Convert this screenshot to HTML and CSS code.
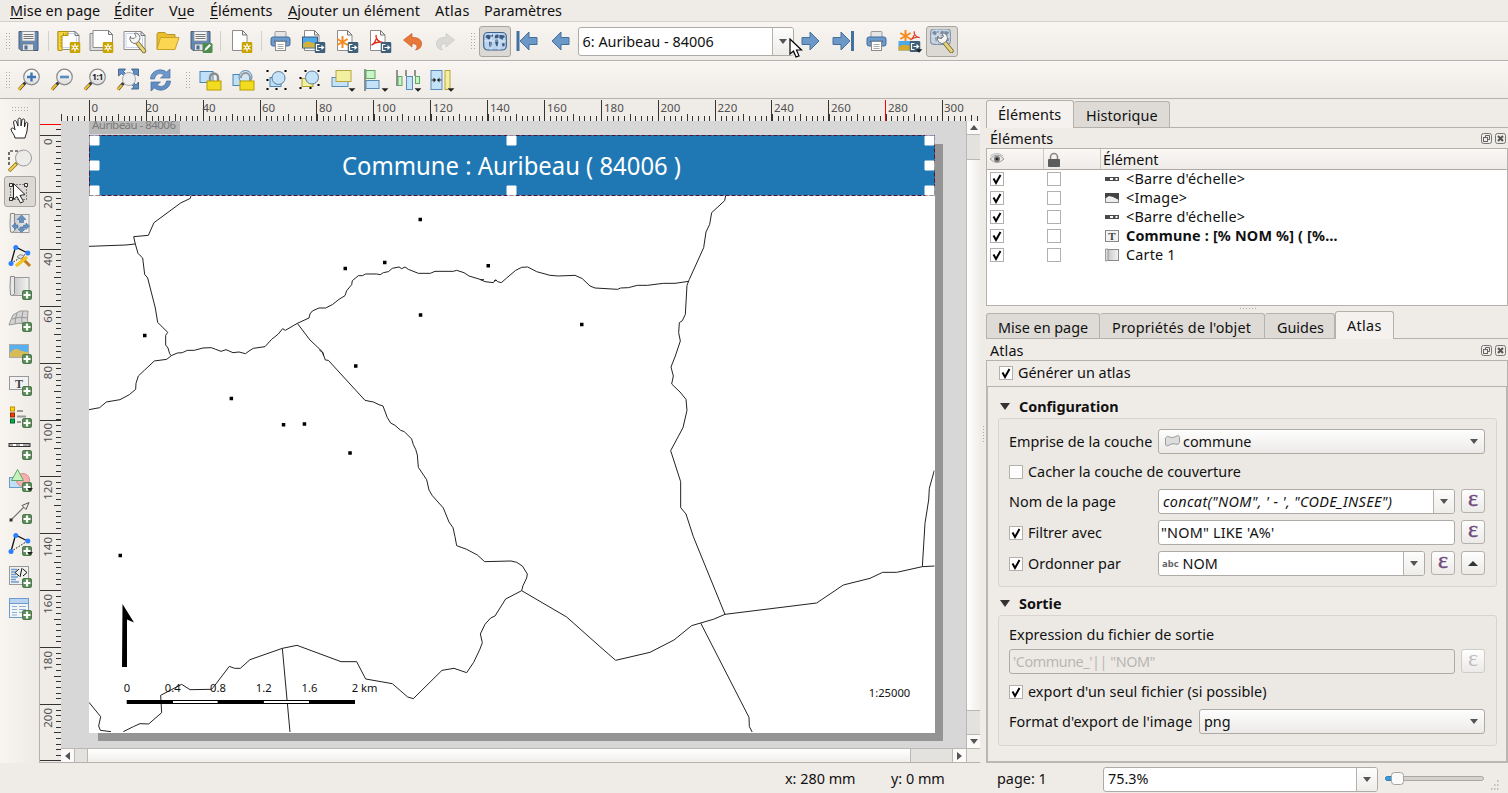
FILE: index.html
```html
<!DOCTYPE html>
<html lang="fr">
<head>
<meta charset="utf-8">
<title>Mise en page</title>
<link rel="stylesheet" href="styles.css">
</head>
<body>
<svg class="defs" width="0" height="0">
  <defs>
    <linearGradient id="lens" x1="0" y1="0" x2="0" y2="1"><stop offset="0" stop-color="#fff"/><stop offset="1" stop-color="#dcdcdc"/></linearGradient>
    <linearGradient id="roll"><stop offset="0" stop-color="#c4c4c4"/><stop offset="1" stop-color="#f4f4f4"/></linearGradient>
    <symbol id="plus" viewBox="0 0 10 10"><rect x=".5" y=".5" width="9" height="9" rx="1.500" fill="#5b8c5a" stroke="#4c7a4b"/><path d="M5 1.500v7M1.500 5h7" stroke="#fff" stroke-width="2.200"/></symbol>
    <symbol id="gold" viewBox="0 0 11 11"><rect width="11" height="11" rx="1.500" fill="#c8a400"/><path d="M5.500 1.500v8M2 3.500l7 4M9 3.500l-7 4" stroke="#fff" stroke-width="1.300"/><circle cx="5.500" cy="5.500" r="2" fill="#fff"/><circle cx="5.500" cy="5.500" r="1" fill="#c8a400"/></symbol>
    <symbol id="exp" viewBox="0 0 11 11"><rect width="11" height="11" rx="1.500" fill="#3f5f78"/><path d="M5 2.500H2v6h3M4 5.500h4" stroke="#fff" stroke-width="1.200" fill="none"/><path d="M7 3l3 2.500L7 8z" fill="#fff"/></symbol>
    <symbol id="sheet" viewBox="0 0 24 24"><path d="M5 1.500h10l4.500 4.500v15.500H5z" fill="#fff" stroke="#8c8c8c"/><path d="M15 1.500V6h4.500z" fill="#eee" stroke="#777"/></symbol>
    <symbol id="wide" viewBox="0 0 24 24"><path d="M1.500 2.500h17l4 4v14h-21z" fill="#fff" stroke="#8c8c8c"/><path d="M3.500 4.500h14l2.500 3v11h-16.500z" fill="none" stroke="#c9d3ee"/><path d="M18.500 2.500v4h4z" fill="#eee" stroke="#777"/></symbol>
    <symbol id="floppy" viewBox="0 0 24 24"><path d="M2.500 2.500h19v19H4.500l-2-2z" fill="#6088b8" stroke="#4a5a70"/><rect x="5.500" y="2.500" width="13" height="9.500" fill="#f4f4f4" stroke="#8a9099" stroke-width=".8"/><path d="M7 5.500h10M7 7.500h10M7 9.500h10" stroke="#777"/><rect x="6" y="15" width="11" height="6.500" fill="#e4e4e4" stroke="#777" stroke-width=".8"/><rect x="8" y="16.500" width="3" height="4" fill="#4a6e9c"/></symbol>
    <symbol id="mag" viewBox="0 0 24 24"><path d="M9 14.500L2.500 21.500" stroke="#3c3c3c" stroke-width="3.200"/><path d="M7 16.500L2 21.800" stroke="#f2bd2a" stroke-width="2.200"/><circle cx="15" cy="9" r="7.800" fill="url(#lens)" stroke="#8b8b8b" stroke-width="1.200"/></symbol>
    <symbol id="printer" viewBox="0 0 24 24"><rect x="6.500" y="2.500" width="11" height="7" rx="1" fill="#e6e6e6" stroke="#9a9a9a"/><rect x="2.500" y="8" width="19" height="9" rx="2" fill="#6c9acb" stroke="#446a9c"/><path d="M5.500 12.500h13" stroke="#3d5b82" stroke-width="1.500"/><rect x="7" y="12.500" width="10" height="9" fill="#fff" stroke="#8a8a8a"/><path d="M9 15.500h6M9 17.500h6M9 19.500h6" stroke="#aaa"/></symbol>
    <symbol id="arrow" viewBox="0 0 24 24"><path d="M3.500 12L12.500 3v5.500h8v7h-8V21z" fill="#6c98c8" stroke="#44709f" stroke-linejoin="round"/></symbol>
    <symbol id="wrench" viewBox="0 0 24 24"><path d="M14 13l6.500 8" stroke="#6e6535" stroke-width="4.400" stroke-linecap="round"/><path d="M14 13l6.500 8" stroke="#e8d57a" stroke-width="2.800" stroke-linecap="round"/><path d="M7 6a5 5 0 0 0 6.500 7l2.500-3A5 5 0 0 0 11 3l1.500 3.500-2 2-3.500-.5z" fill="#f4f4f4" stroke="#777"/></symbol>
    <symbol id="world" viewBox="0 0 24 24"><rect x=".7" y="3.500" width="22.600" height="17.500" rx="4" fill="#bcd3ef" stroke="#3e638f" stroke-width="1.200"/><path d="M3 6.500l2-.8 2 .6 3-.8v2l-2 .5-1 2-2 .5-1-1.500-1.500-.5zM6.500 12l2.500 1v2.500l-1.500 3-1-1-.5-3.500zM12 6.500l2-1 4 .5 3.500.5v2l-1.500.5-.5 2.500-1.500-2-1.500.5-1-1.500-1 .5-2 .5-.8-1zM12 11l2.500-.5 1.500 2-1 2-.5 3-1.500-1-.8-3zM19 14.500l2.500-.5v3l-2 .5z" fill="#37597f"/><path d="M1 12h22M8 4v17M16 4v17" stroke="#eaf2fb" stroke-width=".7"/></symbol>
    <symbol id="nodes" viewBox="0 0 24 24"><path d="M3 19.500L7.500 3 19.500 9" fill="none" stroke="#111" stroke-width="1.300"/><path d="M3 19.500L19.500 9" stroke="#111" stroke-dasharray="1.500 1.500"/><circle cx="3" cy="19.500" r="2.500" fill="#2a7fff"/><circle cx="7.800" cy="3.500" r="2.500" fill="#2a7fff"/><circle cx="19.800" cy="9" r="2.500" fill="#2a7fff"/></symbol>
    <symbol id="dd" viewBox="0 0 6 3"><path d="M0 0h6L3 3z" fill="#222"/></symbol>
    <symbol id="padlock" viewBox="0 0 24 24"><path d="M11.500 13V9.500a4 4 0 0 1 8 0V13" fill="none" stroke="#8c8c8c" stroke-width="2.400"/><rect x="8.500" y="13" width="14" height="9" fill="#f2dc1f" stroke="#b89c00"/></symbol>
    <symbol id="tick" viewBox="0 0 14 14"><rect x=".5" y=".5" width="13" height="13" fill="#fff" stroke="#b4b1ad"/><path d="M3.500 6.500l2.500 4.500 4.500-8" fill="none" stroke="#000" stroke-width="2"/></symbol>
    <symbol id="box" viewBox="0 0 14 14"><rect x=".5" y=".5" width="13" height="13" fill="#fff" stroke="#b4b1ad"/></symbol>
    <symbol id="bar" viewBox="0 0 14 14"><path d="M0 7h14" stroke="#4a4a4a" stroke-width="4"/><path d="M5 7h3M10.500 7h2" stroke="#fff" stroke-width="2"/></symbol>
    <symbol id="float" viewBox="0 0 11 11"><rect x=".5" y=".5" width="10" height="10" rx="2" fill="none" stroke="#777"/><rect x="2.500" y="4.500" width="4" height="4" fill="none" stroke="#666"/><path d="M4.500 4.500v-2h4v4h-2" fill="none" stroke="#666"/></symbol>
    <symbol id="close" viewBox="0 0 11 11"><rect x=".5" y=".5" width="10" height="10" rx="2" fill="none" stroke="#777"/><path d="M3 3l5 5M8 3l-5 5" stroke="#555" stroke-width="2"/></symbol>
    <symbol id="rollmap" viewBox="0 0 24 24"><rect x="4" y="2.500" width="17" height="18" fill="url(#roll)" stroke="#9a9a9a"/><path d="M2.500 1.500h4v17q-1.500 3-4 1.500-1-7 0-18.500z" fill="#e8e8e8" stroke="#8a8a8a"/></symbol>
    <symbol id="star" viewBox="0 0 12 12"><path d="M6 0v12M.8 3l10.400 6M11.200 3L.8 9" stroke="#f58a1f" stroke-width="2"/></symbol>
    <symbol id="pdf" viewBox="0 0 14 14"><path d="M1 12C5 10 7 5 6 1c-1 4 3 8 7 8-4-1-8 0-12 3z" fill="none" stroke="#e03020" stroke-width="1.400"/></symbol>
  </defs>
</svg>

<nav class="menu">
  <span class="m1"><u>M</u>ise en page</span><span class="m2"><u>É</u>diter</span><span class="m3">V<u>u</u>e</span><span class="m4"><u>É</u>léments</span><span class="m5"><u>A</u>jouter un élément</span><span class="m6">Atlas</span><span class="m7">Paramètres</span>
</nav>

<div class="toolbar first">
  <i class="grip"></i>
  <svg class="ic" viewBox="0 0 24 24"><use href="#floppy"/></svg>
  <i class="sep"></i>
  <svg class="ic" viewBox="0 0 24 24"><use href="#wide"/><path d="M1.500 2.500h10v4h-6v15h-4z" fill="#f5d548" stroke="#b89500"/><path d="M3.500 8h2M3.500 11h2M3.500 14h2M3.500 17h2M7 4v2M9.500 4v2" stroke="#a58400" stroke-width=".8"/><use href="#gold" x="13" y="13" width="11" height="11"/></svg>
  <svg class="ic" viewBox="0 0 24 24"><path d="M.5 21.500V4.500h4v13h14v4z" fill="#ddd" stroke="#8c8c8c"/><path d="M3.500 1.500h15.500l4 4v13h-19.500z" fill="#fff" stroke="#8c8c8c"/><path d="M19 1.500v4h4z" fill="#eee" stroke="#777"/><use href="#gold" x="13" y="13" width="11" height="11"/></svg>
  <svg class="ic" viewBox="0 0 24 24"><use href="#wide"/><use href="#wrench" x="1" y="1"/></svg>
  <svg class="ic" viewBox="0 0 24 24"><path d="M1.500 20V5l1-1.500h7l2 2h8v4" fill="#e9bf2c" stroke="#b8942a"/><path d="M1.500 20.500L5 8.500h18.500l-4 12z" fill="#fbd650" stroke="#c9a02c"/></svg>
  <svg class="ic" viewBox="0 0 24 24"><use href="#floppy"/><rect x="14" y="14" width="10" height="10" rx="1.500" fill="#4f8a4e"/><path d="M16 22l1-3 4-4 1.500 1.500-4 4z" fill="#fff"/></svg>
  <i class="sep mid"></i>
  <svg class="ic" viewBox="0 0 24 24"><use href="#sheet" x="-2"/><use href="#gold" x="12" y="13" width="11" height="11"/></svg>
  <i class="sep thin"></i>
  <svg class="ic" viewBox="0 0 24 24"><use href="#printer"/></svg>
  <svg class="ic" viewBox="0 0 24 24"><use href="#sheet" x="-2"/><rect x="1" y="8" width="15" height="11" fill="#4fa8e8" stroke="#385a78"/><path d="M1.500 15q4-4 7-2l7 2v3.500h-14z" fill="#d4b13c"/><use href="#exp" x="13" y="13" width="11" height="11"/></svg>
  <svg class="ic" viewBox="0 0 24 24"><use href="#sheet" x="-2"/><use href="#star" x="2" y="7" width="12" height="12"/><use href="#exp" x="13" y="13" width="11" height="11"/></svg>
  <svg class="ic" viewBox="0 0 24 24"><use href="#sheet" x="-2"/><use href="#pdf" x="3" y="5" width="13" height="13"/><use href="#exp" x="13" y="13" width="11" height="11"/></svg>
  <svg class="ic" viewBox="0 0 24 24"><path d="M3 11l8.500-6.500v4c7-.5 10 3 9.500 7-.4 3-2.500 5-6 5.500 3-3 1.500-6.500-3.500-6.500v3.500z" fill="#e8783a" stroke="#c25a20" stroke-width=".7"/></svg>
  <svg class="ic" viewBox="0 0 24 24"><path d="M21 11l-8.500-6.500v4C5.500 8 2.500 11.500 3 15.500c.4 3 2.500 5 6 5.500-3-3-1.500-6.500 3.500-6.500v3.500z" fill="#d9dad7" stroke="#c6c7c4" stroke-width=".7"/></svg>
  <i class="grip g2"></i>
  <b class="pressed"><svg viewBox="0 0 24 24"><use href="#world"/></svg></b>
  <svg class="ic" viewBox="0 0 24 24"><path d="M2.500 2v20" stroke="#44709f" stroke-width="3"/><use href="#arrow" x="1"/></svg>
  <svg class="ic" viewBox="0 0 24 24"><use href="#arrow"/></svg>
  <div class="combo pages"><span>6: Auribeau - 84006</span><em></em></div>
  <svg class="ic" viewBox="0 0 24 24"><use href="#arrow" transform="matrix(-1 0 0 1 24 0)"/></svg>
  <svg class="ic" viewBox="0 0 24 24"><path d="M21 2v20" stroke="#44709f" stroke-width="3"/><use href="#arrow" transform="matrix(-1 0 0 1 22 0)"/></svg>
  <svg class="ic" viewBox="0 0 24 24"><use href="#printer"/></svg>
  <svg class="ic" viewBox="0 0 24 24"><use href="#star" x="2" y="1" width="12" height="12"/><use href="#pdf" x="12" y="1" width="11" height="12"/><rect x="1" y="12" width="14" height="9.500" fill="#4fa8e8"/><path d="M1 18q4-3 7-2l7 1v4.500H1z" fill="#d4a92c"/><use href="#exp" x="12" y="12" width="11" height="11"/><use href="#dd" x="18" y="20" width="7" height="4"/></svg>
  <b class="pressed"><svg viewBox="0 0 24 24"><use href="#world" y="-3" width="21" height="21" opacity=".6"/><use href="#wrench" x="1" y="1"/></svg></b>
</div>

<div class="toolbar second">
  <i class="grip"></i>
  <svg class="ic" viewBox="0 0 24 24"><use href="#mag"/><path d="M15 4.500v9M10.500 9h9" stroke="#3f76b0" stroke-width="2.400"/></svg>
  <svg class="ic" viewBox="0 0 24 24"><use href="#mag"/><path d="M10.500 9h9" stroke="#5a8cc0" stroke-width="2.600"/></svg>
  <svg class="ic" viewBox="0 0 24 24"><use href="#mag"/><text x="15" y="12.300" class="one">1:1</text></svg>
  <svg class="ic" viewBox="0 0 24 24"><path d="M3 1h7L8 3.500l4 4-2 2-4-4L3 8zM23 1v7l-2.500-2-4 4-2-2 4-4L16 1zM23 21h-7l2.500-2-4-4 2-2 4 4 2.500-3z" fill="#5f8fc4" stroke="#35577f" stroke-width=".8"/><path d="M8 15L2.500 21.500" stroke="#3c3c3c" stroke-width="3.200"/><path d="M6.500 17L2 21.800" stroke="#f2bd2a" stroke-width="2.200"/><circle cx="13.500" cy="11" r="6.500" fill="#eee" stroke="#aaa"/></svg>
  <svg class="ic" viewBox="0 0 24 24"><path d="M2 11C2 3 12-1 18 4l3.500-3v9H12l3.500-3C11 4 7 6 6 11z" fill="#6c98cc" stroke="#476f9f" stroke-width=".7"/><path d="M22 13c0 8-10 12-16 7l-3.500 3v-9H12l-3.500 3c4.500 3 8.500 1 9.500-4z" fill="#5f8dc4" stroke="#476f9f" stroke-width=".7"/></svg>
  <i class="grip g3"></i>
  <svg class="ic" viewBox="0 0 24 24"><rect x="1.500" y="3.500" width="13" height="11" fill="#bfe0f7" stroke="#4a86b4"/><use href="#padlock"/></svg>
  <svg class="ic" viewBox="0 0 24 24"><rect x="1.500" y="6.500" width="10" height="11" fill="#bfe0f7" stroke="#4a86b4"/><circle cx="14" cy="9" r="6.500" fill="#cde6f8" stroke="#5a8cb4"/><path d="M9.500 10a4.500 4.500 0 0 1 9-1V13" fill="none" stroke="#999" stroke-width="2"/><rect x="8.500" y="13" width="14" height="9" fill="#f2dc1f" stroke="#b89c00"/></svg>
  <svg class="ic" viewBox="0 0 24 24"><rect x="5.500" y="9.500" width="11" height="9" fill="#bfe0f7" stroke="#4a86b4"/><circle cx="14" cy="10" r="6.500" fill="#c5e3f8" stroke="#5a7c9c"/><path d="M2 3h2M20 3h2M2 21h2M20 21h2M11 21h2M2 12h2" stroke="#000" stroke-width="2"/></svg>
  <svg class="ic" viewBox="0 0 24 24"><rect x="4.500" y="10.500" width="11" height="8" fill="#f5f0a0" stroke="#b0a02c"/><circle cx="14.500" cy="9.500" r="6.500" fill="#c5e3f8" stroke="#5a7c9c"/><path d="M7 3h2M20 3h2M2 10h2M2 20h2M12 20h2M20 17h2" stroke="#000" stroke-width="2"/></svg>
  <svg class="ic" viewBox="0 0 24 24"><rect x="1.500" y="9.500" width="16" height="9" fill="#c5e3f8" stroke="#5a8cb4"/><rect x="5.500" y="2.500" width="15" height="11" fill="#f3efa0" stroke="#b5a642"/><use href="#dd" x="18" y="20" width="7" height="4"/></svg>
  <svg class="ic" viewBox="0 0 24 24"><path d="M1.500 1v22" stroke="#333"/><rect x="2.500" y="2.500" width="9" height="8" fill="#c8f5c8" stroke="#5fa863"/><rect x="2.500" y="12.500" width="13" height="8" fill="#c5e3f8" stroke="#5a8cb4"/><use href="#dd" x="18" y="20" width="7" height="4"/></svg>
  <svg class="ic" viewBox="0 0 24 24"><path d="M.5 2v16M9.500 2v6M18.500 2v6" stroke="#333"/><rect x="1.500" y="8.500" width="4" height="9" fill="#c8f5c8" stroke="#5fa863"/><rect x="10" y="8.500" width="6" height="13" fill="#c5e3f8" stroke="#5a8cb4"/><rect x="19" y="8.500" width="4" height="7" fill="#c8f5c8" stroke="#5fa863"/><use href="#dd" x="18" y="20" width="7" height="4"/></svg>
  <svg class="ic" viewBox="0 0 24 24"><rect x="1.500" y="2.500" width="11" height="19" fill="#c5e3f8" stroke="#5a8cb4"/><path d="M2 12h4M12 12H8" stroke="#222"/><path d="M4 9.500L6.500 12 4 14.500zM10 9.500L7.500 12l2.500 2.500z" fill="#222"/><rect x="15.500" y="2.500" width="5" height="19" fill="#f3efa0" stroke="#b5a642"/><use href="#dd" x="18" y="20" width="7" height="4"/></svg>
</div>

<div class="work">
  <aside class="tools">
    <i class="hgrip"></i>
    <svg viewBox="0 0 24 24"><path d="M7 22c0-3-4-6-4-9 1-2 3-.5 4 1L5.500 6c.5-2 2.500-2 3 0L10 10V3.500c.7-1.800 2.600-1.800 3 0V10l1-6c.7-1.500 2.500-1.400 2.700.2L16.500 11l1-4c1-1.300 2.500-.6 2.300.8L19 15c-.5 3-1.500 4-2 7z" fill="#fff" stroke="#222"/></svg>
    <svg viewBox="0 0 24 24"><path d="M1 17V3h14" fill="none" stroke="#111" stroke-width="1.200" stroke-dasharray="3 2"/><path d="M9 15L1 23" stroke="#8f7a20" stroke-width="3.600"/><path d="M8 16l-6.500 6.500" stroke="#f4cf4a" stroke-width="2"/><circle cx="15.500" cy="10" r="8" fill="#ecebe9" fill-opacity=".9" stroke="#9b9b9b"/></svg>
    <b class="pressed"><svg viewBox="0 0 24 24"><rect x="2.500" y="4.500" width="16" height="15" fill="none" stroke="#222" stroke-dasharray="1 2"/><path d="M1.500 3.500h3v3h-3zM16.500 3.500h3v3h-3zM1.500 17.500h3v3h-3z" fill="#eee" stroke="#333"/><path d="M5.500 3.500v16l3.500-3 3.500 6.500 3-1.500-3.500-6 5-1z" fill="#fff" stroke="#222"/></svg></b>
    <svg viewBox="0 0 24 24"><use href="#rollmap"/><path d="M13.500 3l4.500 4.500h-2.500v3h-4v-3H9zM4 14l3.500-3V13h2.500v3H7.500V17.500zM21.500 14l-3.500-3V13h-2.500v3H18V17.500zM13.500 20.500l-3.500-3.500h2v-2h3v2h2z" fill="#6590c0" stroke="#476f9f" stroke-width=".6"/></svg>
    <svg viewBox="0 0 24 24"><use href="#nodes"/><path d="M13 13l9 9" stroke="#c07a18" stroke-width="3"/><path d="M19 13L8 22" stroke="#f2c21e" stroke-width="3.500"/><path d="M9 13q3-4 7-1l-3 3z" fill="#ddd" stroke="#888"/></svg>
    <svg viewBox="0 0 24 24"><use href="#rollmap" y="-1"/><use href="#plus" x="14" y="14" width="10" height="10"/></svg>
    <svg viewBox="0 0 24 24"><path d="M1 17q2-6 4-10l7-4h8q-1 7 0 13-9-2-19 1z" fill="#d4d4d4" stroke="#999"/><path d="M4 11q8-3 16-1M9 5q-2 6-2 11M15 3q-2 7-1 13" fill="none" stroke="#999"/><use href="#plus" x="14" y="14" width="10" height="10"/></svg>
    <svg viewBox="0 0 24 24"><rect x="1.500" y="4.500" width="19" height="13" fill="#58b0f0" stroke="#aaa"/><path d="M2 13q4-5 8-4 4 3 10 3v5H2z" fill="#d6bb58"/><use href="#plus" x="14" y="14" width="10" height="10"/></svg>
    <svg viewBox="0 0 24 24"><rect x="1.500" y="4.500" width="19" height="13" fill="#f2f2f2" stroke="#999"/><text x="11" y="15.500" class="tee">T</text><use href="#plus" x="14" y="14" width="10" height="10"/></svg>
    <svg viewBox="0 0 24 24"><path d="M9 7h6M9 12.500h9M9 18h4" stroke="#999" stroke-width="2"/><rect x="2.500" y="3" width="4" height="4" fill="#ffd800" stroke="#c09000"/><rect x="2.500" y="9" width="4" height="4" fill="#f04000" stroke="#902800"/><rect x="2.500" y="15" width="4" height="4" fill="#00b050" stroke="#046030"/><use href="#plus" x="14" y="14" width="10" height="10"/></svg>
    <svg viewBox="0 0 24 24"><rect x="1" y="7.500" width="21" height="3" fill="#aaa" stroke="#333"/><path d="M5 9h3M12 9h3" stroke="#fff" stroke-width="2"/><use href="#plus" x="14" y="14" width="10" height="10"/></svg>
    <svg viewBox="0 0 24 24"><rect x="1.500" y="9.500" width="13" height="10" fill="#bfe0f7" stroke="#6d9cc0"/><circle cx="15" cy="12" r="6.500" fill="#f7b0b0" stroke="#d88"/><path d="M9.500 1.500l6 11h-12z" fill="#c6f2bf" stroke="#5fa863"/><use href="#plus" x="14" y="14" width="10" height="10"/><use href="#dd" x="19" y="20" width="6" height="3"/></svg>
    <svg viewBox="0 0 24 24"><path d="M3 20L17 6" stroke="#777" stroke-width="1.200"/><rect x="1.500" y="18.500" width="3" height="3" fill="#333"/><path d="M21 2.500l-7 3 4 4z" fill="#eee" stroke="#555"/><use href="#plus" x="14" y="14" width="10" height="10"/></svg>
    <svg viewBox="0 0 24 24"><use href="#nodes"/><use href="#plus" x="14" y="14" width="10" height="10"/><use href="#dd" x="19" y="20" width="6" height="3"/></svg>
    <svg viewBox="0 0 24 24"><rect x="1.500" y="2.500" width="19" height="18" fill="#f0f0ee" stroke="#999"/><path d="M3 5.500h6M3 8h4M3 10.500h5M3 13h7M3 15.500h5M3 18h8" stroke="#6b9bd0" stroke-width="1.500"/><path d="M11 5l-4 3.500 4 3.500M15 5l4 3.500-4 3.500M14 4l-2 9" fill="none" stroke="#111"/><use href="#plus" x="14" y="14" width="10" height="10"/></svg>
    <svg viewBox="0 0 24 24"><rect x="1.500" y="2.500" width="19" height="19" fill="#f4f4f4" stroke="#6d9cd0"/><path d="M2 5h18" stroke="#b8d4f0" stroke-width="4"/><path d="M2 7.500h18" stroke="#6d9cd0"/><path d="M4 10.500h5M11 10.500h7M4 13.500h5M11 13.500h7M4 16.500h5M11 16.500h3M4 19h5" stroke="#8ab0dc"/><use href="#plus" x="14" y="14" width="10" height="10"/></svg>
  </aside>

  <main class="view">
    <svg class="canvas" width="926" height="649" viewBox="40 99 926 649">
      <rect x="39.500" y="99" width="940" height="22" fill="#efebe7"/>
      <rect x="39.500" y="99" width="21.500" height="660" fill="#efebe7"/>
      <rect x="61" y="121" width="906" height="628" fill="#d7d7d7"/>
      <rect x="89" y="121" width="91" height="13" fill="#b9b9b9"/>
      <text x="92" y="129" class="tag" textLength="84">Auribeau - 84006</text>
      <rect x="98" y="144" width="845" height="597" fill="#949494"/>
      <rect x="89" y="135" width="846" height="598" fill="#fff"/>
      <svg x="89" y="135" width="845.500" height="597" viewBox="89 135 845.500 597">
        <g class="line">
          <g transform="translate(0 96) scale(.33333)">
            <path d="M267 451 378 447 405 444"/>
            <path d="M573 299 571 307 542 321 462 380 445 418 401 422 406 444 414 472 428 486 434 535 443 546 466 636 473 679 503 709 497 718 497 747 504 756 509 773 514 779 532 771 547 770 562 763 583 763 609 756 634 755 647 760 663 766 678 761 699 770 717 768 736 773 750 763"/>
            <path d="M514 779 500 790 463 795 434 822 415 840 408 862 407 880 388 896 360 911 319 918 299 935 267 941"/>
          </g>
          <g transform="translate(250 96) scale(.33333)">
            <path d="M0 763 10 757 45 752 65 730 85 714 98 698 106 703 142 682 177 666 180 654 187 645 207 636 227 636 247 626 267 610 285 599 290 584 305 566 307 554 325 539 337 539 347 534 380 534 391 536 400 530 415 527 427 517 447 513 455 518 465 513 475 520 505 532 541 532 555 526 610 526 620 523 642 530 657 540 690 550 705 557 730 560 737 551 743 557 754 560 770 546 797 523 815 514 833 513 860 527 900 538 925 540 975 538 997 548 1020 570 1035 576 1103 580 1112 576 1135 575 1162 568 1192 568 1240 562 1275 562 1316 556"/>
            <path d="M690 551h12M732 554h8M142 682 180 732 218 768 221 780"/>
          </g>
          <g transform="translate(640 96) scale(.33333)">
            <path d="M257 299 254 314 215 350 209 385 198 408 191 455 148 550 141 568 136 655 127 674 118 680 116 710 121 735 106 780 93 813 100 840 95 864 120 888 138 910 141 943 129 995 92 1064"/>
          </g>
          <g transform="translate(600 440) scale(.33333)">
            <path d="M212 32 242 125 242 203 258 222 280 290 375 523"/>
            <path d="M0 620 47 661 150 637 222 600 275 557 302 549 340 538 375 523 650 489 730 435 810 415 848 397 890 397 967 380 1005 378"/>
            <path d="M967 380 975 250 986 180 988 145 1003 91M302 549 447 832 448 860 457 877"/>
          </g>
          <g transform="translate(250 350) scale(.33333)">
            <path d="M208 0 218 8 226 30 235 31 345 151 370 156 387 164 399 168 412 203 422 219 435 226 452 241 463 245 485 267 490 284 497 298 502 315 505 352 530 389 537 420 547 437 580 474 597 516 609 533 615 560 620 587 650 598 682 615 704 635 783 633 800 637 817 648 832 672 830 684 819 707 815 722 950 801 1050 890"/>
            <path d="M815 722 767 747 735 798 722 804 705 823 691 852 697 878 690 897 671 937 650 968 612 955 576 961 490 1046 473 1041 427 1001 347 987 320 935 273 935 141 886 97 895 0 929 -29 955 -46 955 -62 949 -110 1012 -116 1018 -180 1019 -205 1003 -268 1036 -265 1088 -304 1122 -330 1121 -350 1130 -380 1145"/>
            <path d="M97 895 120 1146M-483 1057 -448 1100 -454 1128 -449 1141 -417 1145"/>
          </g>
        </g>
      </svg>
      <path class="dots" d="M143 335.500h3.500M343.500 268.500h3.500M383 262.500h3.500M418.500 219.500h3.500M486.500 265.800h3.500M418.800 315h3.500M580 324.600h3.500M354 366h3.500M229.600 398.500h3.500M281.800 424.700h3.500M302.700 424h3.500M348.300 453h3.500M118.500 555.600h3.500"/>
      <path d="M122.500 604l11.500 18.500-7-3V667h-5z" fill="#000"/>
      <path d="M126.700 701.900H355" stroke="#000" stroke-width="4"/>
      <path d="M173 701.900h44.600M263.900 701.900H309" stroke="#fff" stroke-width="2"/>
      <g class="scale">
        <text x="127" y="692">0</text><text x="172.700" y="692">0.4</text><text x="218" y="692">0.8</text><text x="263.700" y="692">1.2</text><text x="309.500" y="692">1.6</text><text x="364.500" y="692">2 km</text>
        <text x="889.500" y="697">1:25000</text>
      </g>
      <rect x="89" y="135" width="846" height="60.500" fill="#1f78b4"/>
      <rect x="89.500" y="135.500" width="845" height="60" fill="none" stroke="#55102f" stroke-dasharray="4 2"/>
      <path d="M90 136h9v9h-9zM90 161h9v9h-9zM90 186h9v9h-9zM507 136h9v9h-9zM507 186h9v9h-9zM925 136h9v9h-9zM925 161h9v9h-9zM925 186h9v9h-9z" fill="#fff" stroke="#fff"/>
      <text x="511.500" y="175" class="title" textLength="339" lengthAdjust="spacingAndGlyphs">Commune : Auribeau ( 84006 )</text>

      <g class="ticks" shape-rendering="crispEdges">
        <path d="M61 118.500H967" stroke-width="5" stroke-dasharray="1 4.687"/>
        <path d="M61 117.500H967" stroke-width="7" stroke-dasharray="1 27.435"/>
        <path d="M89 110.500H967" stroke-width="21" stroke-dasharray="1 55.870"/>
        <path d="M58.500 123.600V759" stroke-width="5" stroke-dasharray="1 4.690"/>
        <path d="M57.500 135V759" stroke-width="7" stroke-dasharray="1 27.450"/>
        <path d="M50.500 135V759" stroke-width="21" stroke-dasharray="1 55.900"/>
        <path d="M885.500 100v21M40 124.500h21" class="red"/>
      </g>
      <g class="nums">
        <text x="91.500" y="112">0</text><text x="145.500" y="112">20</text><text x="202.500" y="112">40</text><text x="262" y="112">60</text><text x="319" y="112">80</text><text x="376" y="112">100</text><text x="433" y="112">120</text><text x="490" y="112">140</text><text x="547" y="112">160</text><text x="604" y="112">180</text><text x="660.500" y="112">200</text><text x="717.500" y="112">220</text><text x="774" y="112">240</text><text x="831" y="112">260</text><text x="888" y="112">280</text><text x="944" y="112">300</text>
      </g>
      <g class="nums end">
        <text transform="translate(52 138.500) rotate(-90)">0</text><text transform="translate(52 195.500) rotate(-90)">20</text><text transform="translate(52 252.500) rotate(-90)">40</text><text transform="translate(52 309.500) rotate(-90)">60</text><text transform="translate(52 366) rotate(-90)">80</text><text transform="translate(52 423) rotate(-90)">100</text><text transform="translate(52 480) rotate(-90)">120</text><text transform="translate(52 537) rotate(-90)">140</text><text transform="translate(52 594) rotate(-90)">160</text><text transform="translate(52 651) rotate(-90)">180</text><text transform="translate(52 708) rotate(-90)">200</text>
      </g>
    </svg>
    <div class="vcol">
      <svg class="rend" width="14" height="22" viewBox="966 99 14 22" shape-rendering="crispEdges"><path d="M971 118.500h8M970.900 117.500h1" stroke="#333" stroke-width="5" stroke-dasharray="1 4.687"/></svg>
      <div class="vs"><i class="btn up"></i><i class="gap a"></i><i class="thumb"></i><i class="gap b"></i><i class="btn down"></i></div>
    </div>
    <div class="hs"><i class="rul"></i><i class="btn left"></i><i class="gap a"></i><i class="thumb"></i><i class="gap b"></i><i class="btn right"></i><i class="corner"></i></div>
  </main>

  <div class="vsplit"><i></i></div>

  <section class="side">
    <div class="tabs t1"><span class="on el">Éléments</span><span class="hi">Historique</span></div>
    <div class="head h1"><span>Éléments</span><svg viewBox="0 0 11 11"><use href="#float"/></svg><svg viewBox="0 0 11 11"><use href="#close"/></svg></div>
    <div class="list">
      <div class="lh">
        <span><svg width="16" height="12" viewBox="0 0 16 12"><path d="M1 6q7-8 14 0-7 7-14 0z" fill="#e8e8e8" stroke="#999"/><circle cx="8" cy="6" r="3" fill="#777"/><circle cx="8" cy="6" r="1.300" fill="#222"/><path d="M1 3q7-5 13 0" fill="none" stroke="#bbb"/></svg></span>
        <span><svg width="12" height="15" viewBox="0 0 12 15"><path d="M2.500 8V5a3.500 3.500 0 0 1 7 0v3" fill="none" stroke="#888" stroke-width="1.600"/><rect y="7" width="12" height="8" rx="1" fill="#5c5c5c"/></svg></span>
        <span>Élément</span>
      </div>
      <div class="lr"><svg viewBox="0 0 14 14"><use href="#tick"/></svg><svg viewBox="0 0 14 14"><use href="#box"/></svg><svg viewBox="0 0 14 14"><use href="#bar"/></svg><span>&lt;Barre d'échelle&gt;</span></div>
      <div class="lr"><svg viewBox="0 0 14 14"><use href="#tick"/></svg><svg viewBox="0 0 14 14"><use href="#box"/></svg><svg viewBox="0 0 14 14"><rect x=".5" y="2.500" width="13" height="9" fill="#eee" stroke="#888"/><path d="M0 2h14v7L8 6 4 5 1 7H0z" fill="#444"/></svg><span>&lt;Image&gt;</span></div>
      <div class="lr"><svg viewBox="0 0 14 14"><use href="#tick"/></svg><svg viewBox="0 0 14 14"><use href="#box"/></svg><svg viewBox="0 0 14 14"><use href="#bar"/></svg><span>&lt;Barre d'échelle&gt;</span></div>
      <div class="lr"><svg viewBox="0 0 14 14"><use href="#tick"/></svg><svg viewBox="0 0 14 14"><use href="#box"/></svg><svg viewBox="0 0 14 14"><rect x=".5" y="1.500" width="13" height="11" fill="#f2f2f2" stroke="#888"/><text x="7" y="11" class="tee small">T</text></svg><span class="bold">Commune : [% NOM %] ( [%…</span></div>
      <div class="lr"><svg viewBox="0 0 14 14"><use href="#tick"/></svg><svg viewBox="0 0 14 14"><use href="#box"/></svg><svg viewBox="0 0 14 14"><rect x="2" y="1.500" width="11.500" height="11" fill="url(#roll)" stroke="#8a8a8a"/><path d="M.5 1h2.500v10.500l-1 1.500H.5z" fill="#ddd" stroke="#888" stroke-width=".8"/></svg><span>Carte 1</span></div>
    </div>
    <div class="hsplit"><i></i></div>
    <div class="tabs t2"><span class="mp">Mise en page</span><span class="po">Propriétés de l'objet</span><span class="gu">Guides</span><span class="on at">Atlas</span></div>
    <div class="head h2"><span>Atlas</span><svg viewBox="0 0 11 11"><use href="#float"/></svg><svg viewBox="0 0 11 11"><use href="#close"/></svg></div>
    <div class="gen"><svg class="cb" viewBox="0 0 14 14"><use href="#tick"/></svg><span>Générer un atlas</span></div>
    <div class="scroll">
      <h3>Configuration</h3>
      <div class="group g1">
        <div class="row"><span class="lab">Emprise de la couche</span><div class="combo soft"><svg width="17" height="14" viewBox="0 0 17 14"><path d="M1.500 4q2-3 4-1 3 1.500 6-.5 4-2 4 1v5q-1 3-4 1.500-4-1-6 1-4 2-4-1z" fill="#ddd" stroke="#999"/></svg><span>commune</span><em></em></div></div>
        <div class="row"><svg class="cb" viewBox="0 0 14 14"><use href="#box"/></svg><span>Cacher la couche de couverture</span></div>
        <div class="row r3"><span class="lab">Nom de la page</span><div class="combo edit"><span class="it">concat("NOM", ' - ', "CODE_INSEE")</span><em></em></div><button>ε</button></div>
        <div class="row r4"><svg class="cb" viewBox="0 0 14 14"><use href="#tick"/></svg><span class="lab2">Filtrer avec</span><div class="combo edit"><span class="q">"NOM" LIKE 'A%'</span></div><button>ε</button></div>
        <div class="row r5"><svg class="cb" viewBox="0 0 14 14"><use href="#tick"/></svg><span class="lab2">Ordonner par</span><div class="combo edit"><small>abc</small><span>NOM</span><em></em></div><button>ε</button><button class="tri"><i></i></button></div>
      </div>
      <h3 class="s2">Sortie</h3>
      <div class="group g2b">
        <div class="row e1"><span>Expression du fichier de sortie</span></div>
        <div class="row e2"><div class="combo off"><span>'Commune_'|| "NOM"</span></div><button class="dim">ε</button></div>
        <div class="row e3"><svg class="cb" viewBox="0 0 14 14"><use href="#tick"/></svg><span>export d'un seul fichier (si possible)</span></div>
        <div class="row e4"><span class="lab3">Format d'export de l'image</span><div class="combo soft"><span>png</span><em></em></div></div>
      </div>
    </div>
  </section>
</div>

<footer class="status">
  <span class="sx">x: 280 mm</span><span class="sy">y: 0 mm</span><span class="sp">page: 1</span>
  <div class="combo edit zoom"><span>75.3%</span><em></em></div>
  <svg width="123" height="28" viewBox="0 0 123 28"><rect x="7.500" y="11.500" width="98" height="4" rx="2" fill="#d5d2ce" stroke="#aaa7a3"/><rect x="7.500" y="11.500" width="12" height="4" rx="2" fill="#3a9bdc" stroke="#2f7fb8"/><rect x="13.500" y="7.500" width="12" height="12" rx="3" fill="#fbfafa" stroke="#a5a29e"/><path d="M125 16h2" stroke="none"/><path d="M126 16h0M119 16h1.500M116 20h1.500M119 20h1.500M113 24h1.500M116 24h1.500M119 24h1.500" stroke="#b5b1ac" stroke-width="1.500"/></svg>
</footer>
<svg class="cursor" width="14" height="20" viewBox="0 0 14 20"><path d="M1 1v15l3.500-3 2.500 6 3-1.200L7.500 12H12.500z" fill="#fff" stroke="#000" stroke-width="1.200"/></svg>
</body>
</html>
```
FILE: styles.css
```css
* { box-sizing: border-box; }
body { margin: 0; width: 1508px; height: 793px; overflow: hidden; background: #efebe7; color: #111; font: 14.4px/20px "Noto Sans", sans-serif; display: flex; flex-direction: column; white-space: nowrap; position: relative; }
i, em { font-style: normal; display: block; flex: none; }
svg { flex: none; display: block; }
.defs { position: absolute; }
.cursor { position: absolute; left: 789px; top: 38px; }

.menu { height: 22px; border-bottom: 1px solid #d4d0cc; display: flex; padding-left: 10px; flex: none; line-height: 21px; }
.menu u { text-underline-offset: 2px; }
.m1 { width: 104px; } .m2 { width: 55px; } .m3 { width: 41px; } .m4 { width: 78px; }
.m5 { width: 147px; letter-spacing: .07px; } .m6 { width: 49px; letter-spacing: .3px; }

.toolbar { display: flex; align-items: center; background: linear-gradient(#f8f5f2, #efebe6); border-bottom: 1px solid #b5b2ae; flex: none; }
.first { height: 39px; }
.second { height: 38px; border-top: 1px solid #faf8f6; }
.ic { width: 33px; height: 24px; overflow: visible; }
.grip { width: 5px; height: 18px; margin: 0 2px 0 5px; background: radial-gradient(circle, #aaa 0 .7px, transparent 1px) 0 0 / 3px 3px; }
.g2 { margin: 0 4px 0 8px; }
.g3 { margin: 0 4px 0 8px; }
.sep { width: 7px; height: 20px; background: linear-gradient(#d4d0cc, #d4d0cc) 3px 0 / 1px 20px no-repeat; }
.mid { width: 8px; } .thin { width: 6px; }
.pressed { width: 32px; height: 31px; border: 1px solid #a8a4a0; border-radius: 3px; background: #dcd8d4; display: flex; align-items: center; justify-content: center; flex: none; }
.pressed svg { width: 24px; height: 24px; }
.one { font: bold 8.500px "Noto Sans", sans-serif; letter-spacing: -.4px; text-anchor: middle; fill: #222; }
.tee { font: bold 12px "Liberation Serif", serif; text-anchor: middle; fill: #444; }
.tee.small { font-size: 11px; }

.combo { display: flex; align-items: center; height: 25px; border: 1px solid #aeaaa6; border-radius: 3px; background: #fff; padding-left: 4px; flex: none; }
.combo span { flex: 1; }
.combo em { width: 21px; height: 100%; border-left: 1px solid #b5b1ad; border-radius: 0 2px 2px 0; background: linear-gradient(#fdfdfc, #efedea); display: flex; align-items: center; justify-content: center; }
.combo em::after { content: ""; border: 4px solid transparent; border-top: 5px solid #555; border-bottom: 0; }
.combo.soft { background: linear-gradient(#fefefe, #eceae7); }
.combo.soft em { border: 0; background: none; }
.combo.pages { width: 216px; height: 29px; margin: 0 .5px; }
.combo.pages span { padding-top: 1px; letter-spacing: .02px; }
.combo.off { background: #edeae5; color: #b9b6b2; }

.work { display: flex; height: 664px; flex: none; }
.tools { width: 39px; display: flex; flex-direction: column; align-items: center; background: linear-gradient(90deg, #f8f5f1, #eeeae6); padding-top: 6.500px; }
.tools > svg { width: 24px; height: 24px; margin: 4px 0; overflow: visible; }
.tools .pressed { margin: .5px 0; }
.hgrip { width: 18px; height: 6px; background: radial-gradient(circle, #aaa 0 .7px, transparent 1px) 0 0 / 3px 3px; }

.view { width: 941px; border-left: 1px solid #b5b2ae; display: grid; grid-template: 649px 15px / 926px 14px; }
.line path { fill: none; stroke: #222; stroke-width: 1px; vector-effect: non-scaling-stroke; }
.dots { stroke: #000; stroke-width: 3.500px; }
.scale { font-size: 11.200px; text-anchor: middle; fill: #111; }
.title { font-size: 25px; text-anchor: middle; fill: #fff; }
.tag { font-size: 11.500px; fill: #7b7b7b; }
.ticks path { stroke: #333; fill: none; }
.ticks .red { stroke: #f00; }
.nums { font-size: 11.500px; fill: #505050; }
.end { text-anchor: end; }
.vcol { display: flex; flex-direction: column; height: 649px; }
.rend { height: 22px; }
.vs { flex: 1; display: flex; flex-direction: column; border-left: 1px solid #bab7b4; }
.btn { background: #fbfaf9; display: flex; align-items: center; justify-content: center; }
.vs .btn { height: 13px; } .vs .a { height: 26px; } .vs .b { height: 25px; } .vs .thumb { flex: 1; }
.gap { background: #e4e2de; }
.vs .gap { border: solid #bab7b4; border-width: 1px 0; }
.vs .thumb { background: linear-gradient(90deg, #fff, #f0eeeb); }
.vs .down { height: 13px; }
.btn::after { content: ""; border: 4px solid transparent; }
.up::after { border-bottom: 5px solid #555; border-top: 0; }
.down::after { border-top: 5px solid #555; border-bottom: 0; }
.left::after { border-right: 5px solid #555; border-left: 0; }
.right::after { border-left: 5px solid #555; border-right: 0; }
.hs { grid-column: 1 / 3; display: flex; border: solid #b5b2ae; border-width: 0 0 1px; }
.rul { width: 21px; background: linear-gradient(#333, #333) right 1px / 5px 1px no-repeat, linear-gradient(#333, #333) right 7px / 5px 1px no-repeat, linear-gradient(#333, #333) right 12px / 21px 1px no-repeat; }
.hs .btn, .hs .gap, .hs .thumb { border-top: 1px solid #bab7b4; }
.hs .btn { width: 13px; } .hs .a { width: 14px; } .hs .b { width: 43px; } .hs .thumb { flex: 1; background: linear-gradient(#fff, #f0eeeb); }
.hs .gap { border-left: 1px solid #bab7b4; border-right: 1px solid #bab7b4; }
.hs .corner { width: 14px; border-left: 1px solid #bab7b4; border-top: 1px solid #bab7b4; }

.vsplit { width: 6px; padding: 326px 0 0 2px; }
.vsplit i { width: 3px; height: 17px; background: radial-gradient(circle, #aaa 0 .7px, transparent 1px) 0 0 / 3px 3px; }
.side { width: 522px; display: flex; flex-direction: column; }
.tabs { display: flex; align-items: flex-end; height: 28px; margin-top: 1px; border-bottom: 1px solid #b5b2ae; flex: none; }
.tabs span { height: 26px; line-height: 27px; padding-left: 12px; background: #dedad5; border: 1px solid #b5b2ae; border-left-width: 0; border-bottom: 0; border-radius: 3px 3px 0 0; }
.tabs span.on { height: 28px; line-height: 28px; background: #f4f1ee; margin-bottom: -1px; border-left-width: 1px; }
.t1 span:first-child { padding-left: 11px; }
.el { width: 88px; letter-spacing: .1px; } .hi { width: 96px; letter-spacing: .1px; }
.t2 { height: 27px; margin-top: 0; }
.t2 span { height: 25px; line-height: 27px; }
.t2 span.mp { width: 114px; padding-left: 11px; border-left-width: 1px; }
.po { width: 165px; letter-spacing: .2px; } .gu { width: 70px; }
.t2 span.at { width: 59px; padding-left: 11px; letter-spacing: .3px; }
.head { display: flex; align-items: center; padding: 1px 2px 0 4px; gap: 3px; flex: none; }
.head span { flex: 1; letter-spacing: .1px; padding-top: 1px; }
.head svg { width: 11px; height: 11px; }
.h1 { height: 20px; }
.h2 { height: 21px; }
.list { height: 158px; background: #fff; border: 1px solid #b5b2ae; flex: none; }
.lh { height: 21px; display: flex; background: linear-gradient(#faf7f5, #eeebe8); border-bottom: 1px solid #aeaba7; margin-bottom: -1px; }
.lh span { border-right: 1px solid #cbc8c4; width: 57px; padding: 4px 0 0 2px; }
.lh span:nth-child(2) { padding: 3px 0 0 4px; }
.lh span:nth-child(3) { border: 0; padding: 1px 0 0 2px; }
.lr { height: 19px; display: flex; align-items: center; padding-left: 3px; }
.lr svg { width: 14px; height: 14px; }
.lr svg:nth-child(2) { margin: 0 44px 0 43px; }
.lr svg:nth-child(3) { margin-right: 7px; }
.lr span { letter-spacing: .18px; }
.bold { font-weight: 700; }
.hsplit { height: 6px; padding: 1px 0 0 253px; }
.hsplit i { width: 18px; height: 3px; background: radial-gradient(circle, #aaa 0 .7px, transparent 1px) 0 0 / 3px 3px; }
.gen { height: 27px; border: 1px solid #b5b2ae; display: flex; align-items: center; padding: 0 0 2px 12px; gap: 5px; flex: none; }
.cb { width: 14px; height: 14px; }
.scroll { flex: 1; border: 2px solid #bab7b3; border-top: 0; padding: 8px 9px 0 10px; }
h3 { margin: 0 0 1px; font-size: 14.400px; height: 22px; line-height: 21px; display: flex; align-items: center; gap: 9px; padding-left: 2px; }
h3::before { content: ""; border: 5.500px solid transparent; border-top: 7px solid #333; border-bottom: 0; }
.s2 { margin-top: 5px; }
.group { width: 499px; border: 1px solid #d8d5d1; border-radius: 3px; background: #ece9e4; padding: 10px 11px 0 10px; display: flex; flex-direction: column; }
.g1 { height: 169px; }
.g2b { height: 131px; padding-top: 8px; }
.row { display: flex; align-items: center; height: 25px; flex: none; }
.row .cb { margin-right: 5px; }
.lab { width: 149px; }
.row .soft { flex: 1; }
.soft svg { margin: -2px 2px 0 1px; }
.row:nth-child(2) { height: 35px; }
.row .edit { width: 297px; margin-right: 6px; padding-left: 4px; }
.lab2 { width: 130px; }
.r4, .r5 { margin-top: 6px; }
.r5 .edit { width: 267px; padding-left: 3px; }
.it { font-style: italic; letter-spacing: .35px; }
.q { margin-left: -2px; letter-spacing: .2px; }
small { font: bold 9.500px "Noto Sans", sans-serif; color: #666; margin-right: 4px; }
button { width: 24px; height: 24px; border: 1px solid #b5b1ad; border-radius: 3px; background: linear-gradient(#fefefe, #eceae7); padding: 0; margin: 0 0 1px; font: 24px/16px "Liberation Serif", serif; -webkit-text-stroke: .4px #6e4a7e; color: #6e4a7e; display: flex; justify-content: center; }
.r5 button + button { margin-left: 6px; }
.tri { align-items: center; }
.tri i { border: 5px solid transparent; border-bottom: 5px solid #333; border-top: 0; }
.dim { color: #c0bdc0; border-color: #cfccc8; -webkit-text-stroke: 0; }
.e1 { height: 22px; letter-spacing: .04px; }
.row.e2 { height: 25px; margin-top: 3px; }
.row .off { width: 446px; margin-right: 6px; padding-left: 3px; }
.off span { letter-spacing: -.45px; }
.e3 { height: 25px; margin-top: 5px; letter-spacing: .04px; }
.e4 { margin-top: 5px; }
.lab3 { width: 190px; letter-spacing: .07px; }

.status { height: 30px; display: flex; align-items: center; padding: 2px 0 0 785px; flex: none; }
.sx { width: 106px; } .sy { width: 106px; } .sp { width: 106px; }
.zoom { width: 275px; }
```
